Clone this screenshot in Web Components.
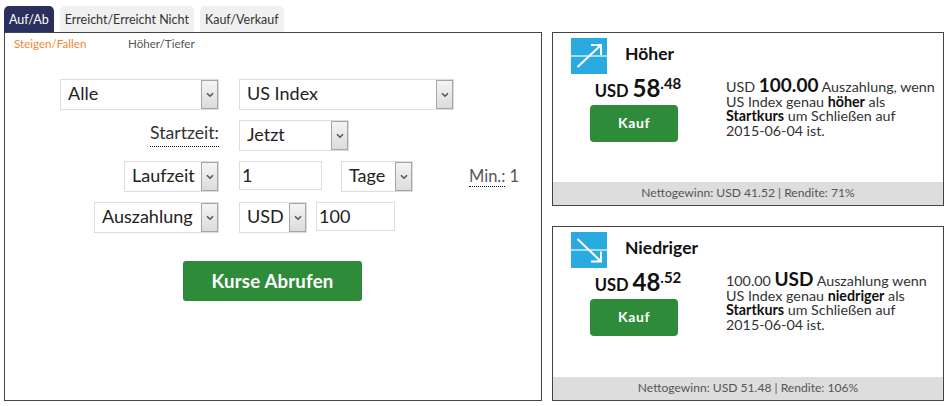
<!DOCTYPE html>
<html>
<head>
<meta charset="utf-8">
<title>Auf/Ab</title>
<style>
  html, body { margin: 0; padding: 0; background: #fff; }
  body { font-family: Lato, "Liberation Sans", sans-serif; color: #333; }
</style>
</head>
<body>
<trade-app>
  <trade-panel slot="main">
    <trade-form></trade-form>
  </trade-panel>
  <offer-card slot="cards" direction="up" title="Höher" whole="58" cents="48" summary="Nettogewinn: USD 41.52 | Rendite: 71%">
    USD <b class="big">100.00</b> Auszahlung, wenn<br>US Index genau <b>höher</b> als<br><b>Startkurs</b> um Schließen auf<br>2015-06-04 ist.
  </offer-card>
  <offer-card slot="cards" direction="down" title="Niedriger" whole="48" cents="52" summary="Nettogewinn: USD 51.48 | Rendite: 106%">
    100.00 <b class="big">USD</b> Auszahlung wenn<br>US Index genau <b>niedriger</b> als<br><b>Startkurs</b> um Schließen auf<br>2015-06-04 ist.
  </offer-card>
</trade-app>

<script>
class TradeApp extends HTMLElement {
  constructor() {
    super();
    this.attachShadow({ mode: "open" });
  }

  connectedCallback() {
    this.shadowRoot.innerHTML = `
      <style>
        :host {
          display: grid;
          grid-template-columns: 538px 392px;
          column-gap: 10px;
          padding: 6px 0 5px 4px;
          width: 947px;
          box-sizing: border-box;
        }
        .left { display: flex; flex-direction: column; }
        .tabs { display: flex; gap: 6px; height: 26px; }
        .tab {
          display: flex;
          align-items: center;
          padding: 0 5px;
          background: #f0f0f0;
          border-radius: 5px 5px 0 0;
          font-size: 12.5px;
          color: #333;
        }
        .tab.active { background: #2b2f5b; color: #fff; }
        .right { display: flex; flex-direction: column; gap: 20px; padding-top: 26px; }
      </style>
      <div class="left">
        <div class="tabs">
          <div class="tab active">Auf/Ab</div>
          <div class="tab">Erreicht/Erreicht Nicht</div>
          <div class="tab">Kauf/Verkauf</div>
        </div>
        <slot name="main"></slot>
      </div>
      <div class="right"><slot name="cards"></slot></div>
    `;
  }
}

class TradePanel extends HTMLElement {
  constructor() {
    super();
    this.attachShadow({ mode: "open" });
  }

  connectedCallback() {
    this.shadowRoot.innerHTML = `
      <style>
        :host {
          display: block;
          height: 369px;
          box-sizing: border-box;
          border: 1px solid #444;
        }
        .subtabs { display: flex; padding: 4px 0 0 9px; height: 14px; font-size: 11.6px; line-height: 13px; }
        .subtabs span:first-child { width: 114px; color: #f58634; }
        .subtabs span:last-child { color: #555; }
        .body { padding: 28px 0 0 55px; }
      </style>
      <div class="subtabs"><span>Steigen/Fallen</span><span>Höher/Tiefer</span></div>
      <div class="body"><slot></slot></div>
    `;
  }
}

class FxSelect extends HTMLElement {
  constructor() {
    super();
    this.attachShadow({ mode: "open" });
  }

  connectedCallback() {
    this.shadowRoot.innerHTML = `
      <style>
        :host {
          display: flex;
          align-items: stretch;
          box-sizing: border-box;
          height: 31px;
          border: 1px solid #ddd;
          background: #fff;
          font-size: 18px;
          color: #222;
        }
        .label { flex: 1; display: flex; align-items: center; padding: 0 0 3px 7px; white-space: nowrap; }
        .arrow {
          width: 17px;
          box-sizing: border-box;
          border: 1px solid #a6a6a6;
          background: linear-gradient(#f4f4f4, #dcdcdc);
          display: flex;
          align-items: center;
          justify-content: center;
        }
      </style>
      <div class="label"><slot></slot></div>
      <div class="arrow">
        <svg width="8" height="6" viewBox="0 0 8 6"><path d="M1 1.2 L4 4.2 L7 1.2" fill="none" stroke="#555" stroke-width="1.6"/></svg>
      </div>
    `;
  }
}

class FxInput extends HTMLElement {
  constructor() {
    super();
    this.attachShadow({ mode: "open" });
  }

  connectedCallback() {
    this.shadowRoot.innerHTML = `
      <style>
        :host {
          display: flex;
          align-items: center;
          box-sizing: border-box;
          height: 29px;
          padding: 0 0 2px 2px;
          border: 1px solid #ddd;
          background: #fff;
          font-size: 18px;
          color: #222;
        }
      </style>
      <slot></slot>
    `;
  }
}

class TradeForm extends HTMLElement {
  constructor() {
    super();
    this.attachShadow({ mode: "open" });
  }

  connectedCallback() {
    this.shadowRoot.innerHTML = `
      <style>
        :host {
          display: grid;
          grid-template-columns: 159px 1fr;
          column-gap: 20px;
          row-gap: 10px;
          font-size: 18px;
          color: #222;
        }
        .start { justify-self: end; }
        .cell { display: flex; align-items: flex-start; }
        .label {
          justify-self: end;
          margin-top: 2px;
          height: 24px;
          line-height: 22px;
          border-bottom: 1px dotted #111;
          font-size: 17.6px;
          color: #333;
        }
        .min { display: flex; align-items: center; height: 29px; margin-left: 56px; font-size: 16.5px; color: #555; }
        .min span { border-bottom: 1px dotted #111; line-height: 20px; margin-top: 2px; margin-right: 4px; }
        button {
          grid-column: 1 / 3;
          justify-self: start;
          margin: 18px 0 0 123px;
          width: 179px;
          height: 40px;
          border: 0;
          border-radius: 3px;
          background: #2e8b3a;
          color: #fff;
          font: 700 18.6px Lato, "Liberation Sans", sans-serif;
          letter-spacing: .2px;
        }
      </style>
      <fx-select style="width:159px">Alle</fx-select>
      <div class="cell"><fx-select style="width:215px">US Index</fx-select></div>

      <div class="label">Startzeit:</div>
      <div class="cell"><fx-select style="width:110px">Jetzt</fx-select></div>

      <fx-select class="start" style="width:95px">Laufzeit</fx-select>
      <div class="cell">
        <fx-input style="width:83px">1</fx-input>
        <fx-select style="width:72px;margin-left:19px">Tage</fx-select>
        <div class="min"><span>Min.:</span> 1</div>
      </div>

      <fx-select class="start" style="width:125px">Auszahlung</fx-select>
      <div class="cell">
        <fx-select style="width:68px">USD</fx-select>
        <fx-input style="width:79px;margin-left:9px">100</fx-input>
      </div>

      <button>Kurse Abrufen</button>
    `;
  }
}

class OfferCard extends HTMLElement {
  constructor() {
    super();
    this.attachShadow({ mode: "open" });
  }

  get arrow() {
    return this.getAttribute("direction") === "up"
      ? "M6.5 29 L30 7 M20 7 L30 7 L30 17"
      : "M6.5 7 L30 29.5 M30 19.5 L30 29.5 L20 29.5";
  }

  connectedCallback() {
    const title = this.getAttribute("title");
    const whole = this.getAttribute("whole");
    const cents = this.getAttribute("cents");
    const summary = this.getAttribute("summary");
    this.removeAttribute("title");

    this.shadowRoot.innerHTML = `
      <style>
        :host {
          display: flex;
          flex-direction: column;
          box-sizing: border-box;
          height: 174px;
          border: 1px solid #444;
          font-size: 14.3px;
          line-height: 14.5px;
          color: #333;
        }
        :host([direction="down"]) { height: 175px; }
        .top { flex: 1; display: grid; grid-template-columns: 173px 1fr; }
        .head { display: flex; align-items: center; gap: 18px; padding: 5px 0 0 18px; }
        .head h2 { margin: -4px 0 0; font-size: 17.5px; font-weight: 700; color: #111; }
        .price { text-align: center; font-weight: 700; color: #111; font-size: 16.5px; line-height: 26px; margin: 1px 0 0 -3px; white-space: nowrap; }
        .price .whole { font-size: 24px; }
        .price sup { font-size: 15px; line-height: 0; vertical-align: 8px; }
        .buy {
          display: flex; align-items: center; justify-content: center;
          width: 88px; height: 37px; margin: 1px 0 0 37px;
          border-radius: 4px;
          background: #2e8b3a; color: #fff;
          font-size: 14px; font-weight: 700; letter-spacing: .6px;
        }
        .text { padding: 47px 0 0 0; white-space: nowrap; }
        ::slotted(b) { color: #111; }
        ::slotted(b.big) { font-size: 19px; line-height: 1px; }
        .foot {
          height: 23px;
          background: #ddd;
          display: flex; align-items: center; justify-content: center;
          font-size: 12.1px;
          color: #555;
        }
      </style>
      <div class="top">
        <div>
          <div class="head">
            <svg width="36" height="36" viewBox="0 0 36 36">
              <rect width="36" height="36" fill="#29abe2"/>
              <rect y="17" width="36" height="2" fill="#a5dcf3"/>
              <path d="${this.arrow}" fill="none" stroke="#fff" stroke-width="2"/>
            </svg>
            <h2>${title}</h2>
          </div>
          <div class="price">USD <span class="whole">${whole}</span><sup>.${cents}</sup></div>
          <div class="buy">Kauf</div>
        </div>
        <div class="text"><slot></slot></div>
      </div>
      <div class="foot">${summary}</div>
    `;
  }
}

customElements.define("trade-app", TradeApp);
customElements.define("trade-panel", TradePanel);
customElements.define("fx-select", FxSelect);
customElements.define("fx-input", FxInput);
customElements.define("trade-form", TradeForm);
customElements.define("offer-card", OfferCard);
</script>
</body>
</html>
